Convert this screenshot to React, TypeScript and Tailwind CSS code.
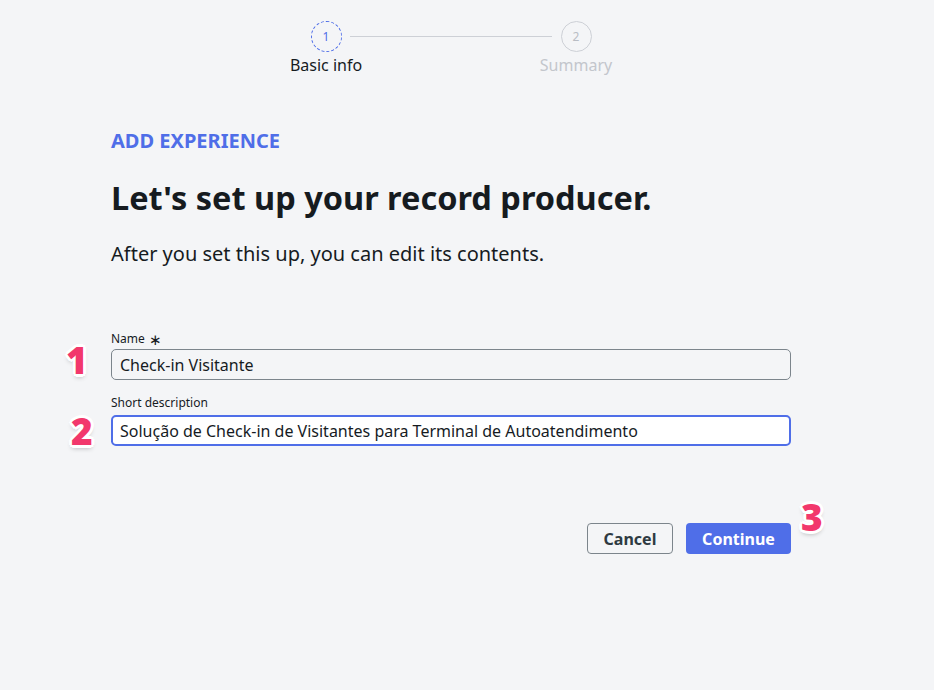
import { useState } from 'react';

const font = { fontFamily: '"Noto Sans", "Open Sans", sans-serif' };

const Marker = ({ n, className }: { n: string; className: string }) => (
  <span
    className={`absolute text-[37px] font-black leading-none text-[#f2386c] ${className}`}
    style={{
      fontFamily: '"Noto Sans", sans-serif',
      textShadow:
        '2px 0 0 #fff, -2px 0 0 #fff, 0 2px 0 #fff, 0 -2px 0 #fff, 2px 2px 0 #fff, -2px -2px 0 #fff, 2px -2px 0 #fff, -2px 2px 0 #fff, 3px 0 0 #fff, -3px 0 0 #fff, 0 3px 0 #fff, 0 -3px 0 #fff, 0 3px 5px rgba(0,0,0,0.3)',
    }}
  >
    {n}
  </span>
);

export default function App() {
  const [name, setName] = useState('Check-in Visitante');
  const [desc, setDesc] = useState(
    'Solução de Check-in de Visitantes para Terminal de Autoatendimento'
  );

  return (
    <div className="relative h-[690px] w-[934px] bg-[#f4f5f7] text-[#161b1f]" style={font}>
      {/* Stepper */}
      <div className="flex pt-[21px] pl-[281px]">
        <div className="flex w-[340px] items-start">
          <div className="flex w-[90px] flex-col items-center">
            <div className="flex h-[31px] w-[31px] items-center justify-center rounded-full border border-dashed border-[#4f6ee8] text-[12px] text-[#4f6ee8]">
              1
            </div>
            <span className="mt-[1px] text-[16px] text-[#161b1f]">Basic info</span>
          </div>
          <div className="mx-[-21px] mt-[15px] h-px flex-1 bg-[#cdd0d6]" />
          <div className="flex w-[90px] flex-col items-center">
            <div className="flex h-[31px] w-[31px] items-center justify-center rounded-full border border-[#cdd0d6] text-[12px] text-[#b9bdc4]">
              2
            </div>
            <span className="mt-[1px] text-[16px] text-[#c3c6cc]">Summary</span>
          </div>
        </div>
      </div>

      {/* Content */}
      <div className="ml-[111px] mt-[51px] w-[680px]">
        <div className="text-[20px] font-bold leading-[26px] text-[#4f6ee8]">ADD EXPERIENCE</div>
        <h1 className="mt-[24px] text-[32.5px] font-bold leading-[40px] text-[#161b1f]">
          Let's set up your record producer.
        </h1>
        <p className="mt-[22px] text-[20px] leading-[28px] text-[#161b1f]">
          After you set this up, you can edit its contents.
        </p>

        <div className="mt-[63px]">
          <label className="flex items-center gap-[4px] text-[12px] leading-[16px] text-[#161b1f]">
            Name <span className="text-[15px] leading-none">∗</span>
          </label>
          <input
            value={name}
            onChange={(e) => setName(e.target.value)}
            className="mt-[2px] block h-[31px] w-full rounded-[5px] border border-[#7c858c] bg-transparent px-[8px] text-[16px] text-[#161b1f] outline-none"
          />
        </div>

        <div className="mt-[15px]">
          <label className="block text-[12px] leading-[16px] text-[#161b1f]">Short description</label>
          <input
            value={desc}
            onChange={(e) => setDesc(e.target.value)}
            className="mt-[4px] block h-[31px] w-full rounded-[5px] border-2 border-[#4f6ee8] bg-white px-[7px] text-[16px] text-[#161b1f] outline-none"
          />
        </div>

        <div className="mt-[77px] flex justify-end gap-[13px]">
          <button className="h-[31px] w-[86px] rounded-[4px] border border-[#7c858c] text-[16px] font-bold text-[#2e3a42]">
            Cancel
          </button>
          <button className="h-[31px] w-[105px] rounded-[4px] bg-[#4f6ee8] text-[16px] font-bold text-white">
            Continue
          </button>
        </div>
      </div>

      <Marker n="1" className="left-[66px] top-[341px]" />
      <Marker n="2" className="left-[71px] top-[412px]" />
      <Marker n="3" className="left-[801px] top-[498px]" />
    </div>
  );
}
